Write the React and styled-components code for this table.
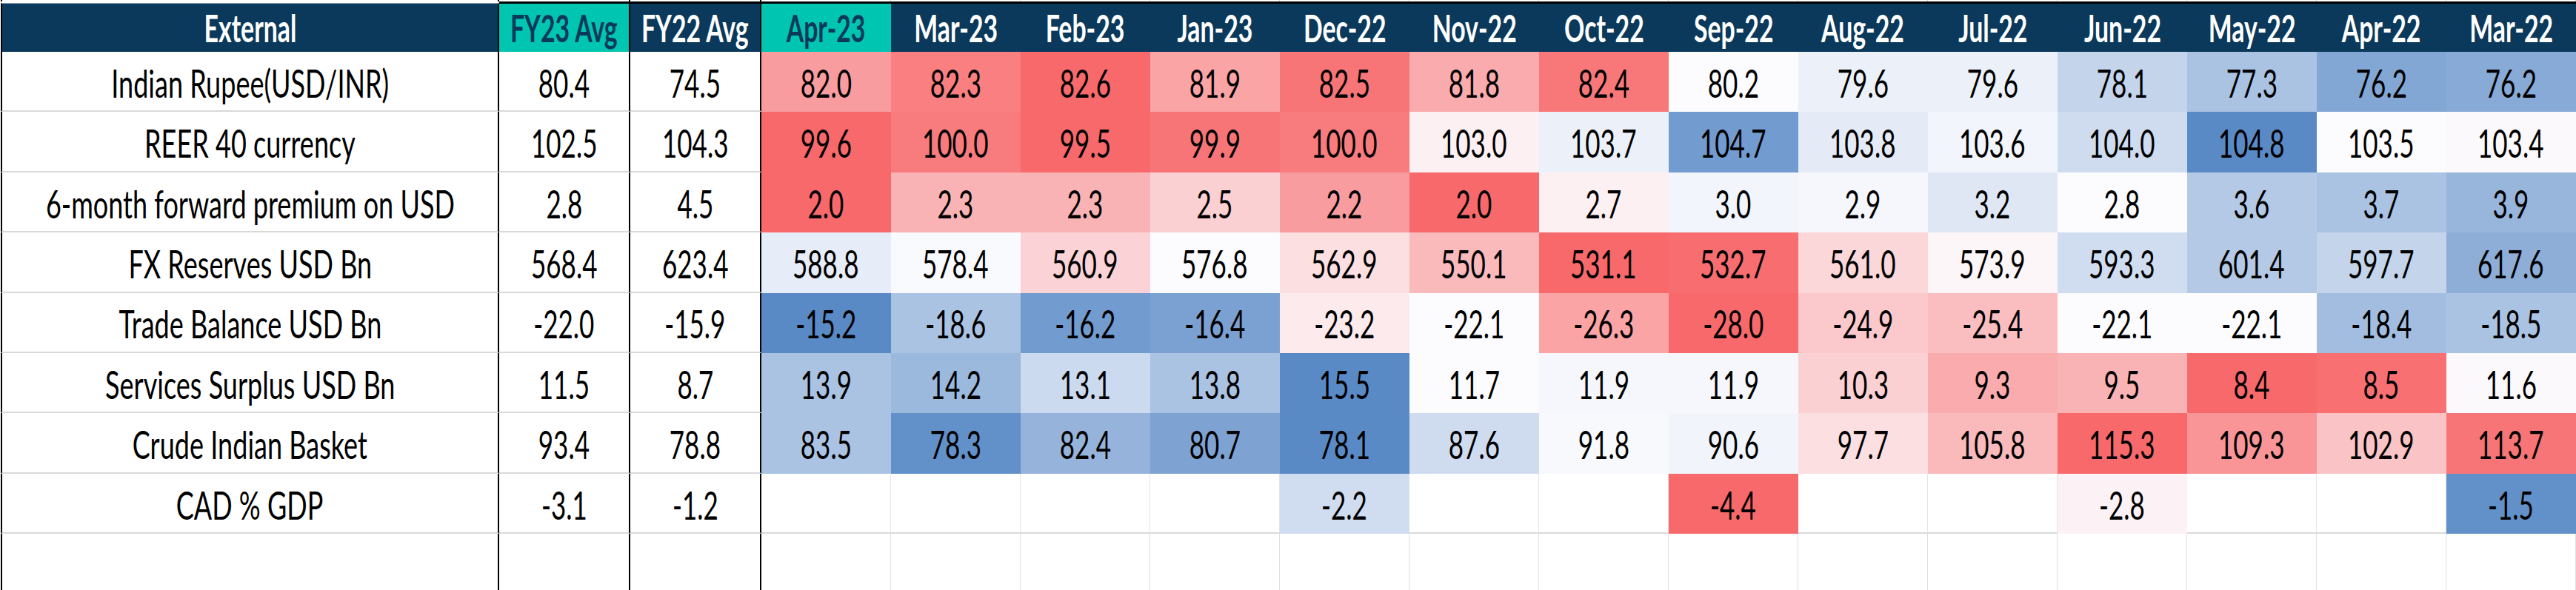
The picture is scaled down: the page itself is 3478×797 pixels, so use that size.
import React from "react";
import styled, { createGlobalStyle, css } from "styled-components";

const GlobalStyle = createGlobalStyle`
  html, body {
    margin: 0;
    padding: 0;
    background: #ffffff;
  }
  body {
    font-family: Lato, "Open Sans", "Liberation Sans", sans-serif;
  }
`;

const NAVY = "#0b395b";
const TEAL = "#00c6b1";
const GRID = "#d9d9d9";
const RULE = "#000000";

const RED = [248, 105, 107];
const WHITE = [252, 252, 255];
const BLUE = [90, 138, 198];

function scaleColor(t) {
  if (t === null || t === undefined) return null;
  const target = t >= 0 ? RED : BLUE;
  const k = Math.min(1, Math.abs(t));
  const c = WHITE.map((w, i) => Math.round(w + (target[i] - w) * k));
  return `rgb(${c[0]}, ${c[1]}, ${c[2]})`;
}

const MONTHS = [
  "Apr-23", "Mar-23", "Feb-23", "Jan-23", "Dec-22", "Nov-22", "Oct-22",
  "Sep-22", "Aug-22", "Jul-22", "Jun-22", "May-22", "Apr-22", "Mar-22",
];

const ROWS = [
  {
    label: "Indian Rupee(USD/INR)", fy23: "80.4", fy22: "74.5",
    values: ["82.0", "82.3", "82.6", "81.9", "82.5", "81.8", "82.4", "80.2", "79.6", "79.6", "78.1", "77.3", "76.2", "76.2"],
    heat: [0.65, 0.85, 1, 0.6, 0.92, 0.55, 0.9, 0, -0.1, -0.1, -0.35, -0.5, -0.75, -0.72],
  },
  {
    label: "REER 40 currency", fy23: "102.5", fy22: "104.3",
    values: ["99.6", "100.0", "99.5", "99.9", "100.0", "103.0", "103.7", "104.7", "103.8", "103.6", "104.0", "104.8", "103.5", "103.4"],
    heat: [1, 0.88, 1, 0.92, 0.88, 0.08, -0.1, -0.85, -0.15, -0.06, -0.28, -1, 0, 0.02],
  },
  {
    label: "6-month forward premium on USD", fy23: "2.8", fy22: "4.5",
    values: ["2.0", "2.3", "2.3", "2.5", "2.2", "2.0", "2.7", "3.0", "2.9", "3.2", "2.8", "3.6", "3.7", "3.9"],
    heat: [1, 0.5, 0.5, 0.3, 0.65, 1, 0.08, -0.06, -0.04, -0.18, 0, -0.45, -0.5, -0.62],
  },
  {
    label: "FX Reserves USD Bn", fy23: "568.4", fy22: "623.4",
    values: ["588.8", "578.4", "560.9", "576.8", "562.9", "550.1", "531.1", "532.7", "561.0", "573.9", "593.3", "601.4", "597.7", "617.6"],
    heat: [-0.13, -0.02, 0.28, 0, 0.2, 0.45, 1, 0.97, 0.25, 0.04, -0.27, -0.45, -0.35, -0.68],
  },
  {
    label: "Trade Balance USD Bn", fy23: "-22.0", fy22: "-15.9",
    values: ["-15.2", "-18.6", "-16.2", "-16.4", "-23.2", "-22.1", "-26.3", "-28.0", "-24.9", "-25.4", "-22.1", "-22.1", "-18.4", "-18.5"],
    heat: [-1, -0.5, -0.85, -0.8, 0.12, 0, 0.6, 1, 0.35, 0.42, 0, 0, -0.55, -0.5],
  },
  {
    label: "Services Surplus USD Bn", fy23: "11.5", fy22: "8.7",
    values: ["13.9", "14.2", "13.1", "13.8", "15.5", "11.7", "11.9", "11.9", "10.3", "9.3", "9.5", "8.4", "8.5", "11.6"],
    heat: [-0.5, -0.6, -0.3, -0.5, -1, 0, -0.04, -0.04, 0.3, 0.55, 0.5, 1, 0.95, 0.02],
  },
  {
    label: "Crude Indian Basket", fy23: "93.4", fy22: "78.8",
    values: ["83.5", "78.3", "82.4", "80.7", "78.1", "87.6", "91.8", "90.6", "97.7", "105.8", "115.3", "109.3", "102.9", "113.7"],
    heat: [-0.5, -0.95, -0.63, -0.78, -1, -0.28, -0.03, -0.07, 0.2, 0.45, 1, 0.7, 0.38, 0.92],
  },
  {
    label: "CAD % GDP", fy23: "-3.1", fy22: "-1.2",
    values: ["", "", "", "", "-2.2", "", "", "-4.4", "", "", "-2.8", "", "", "-1.5"],
    heat: [null, null, null, null, -0.27, null, null, 1, null, null, 0.07, null, null, -0.95],
  },
];

const Sheet = styled.div`
  display: grid;
  grid-template-columns: 673px 177px 177px repeat(14, 1fr);
  grid-template-rows: 2px 68px repeat(8, 81.4px) 1fr;
  width: 3478px;
  height: 797px;
  padding-left: 1px;
  box-sizing: border-box;
  overflow: hidden;
  background: #ffffff;
`;

const ruled = css`
  border-right: 2px solid ${RULE};
  ${(p) => p.$first && `border-left: 2px solid ${RULE};`}
`;

const Cell = styled.div`
  display: flex;
  align-items: center;
  justify-content: center;
  box-sizing: border-box;
  min-width: 0;
  overflow: visible;
`;

const Sliver = styled(Cell)`
  ${(p) => (p.$ruled ? ruled : `border-right: 1px solid ${GRID};`)}
`;

const HeadCell = styled(Cell)`
  background: ${(p) => (p.$teal ? TEAL : NAVY)};
  color: ${(p) => (p.$teal ? NAVY : "#ffffff")};
  ${(p) =>
    p.$first
      ? `margin-top: 2px; border-top: 1px solid #8ea6bb;`
      : `border-top: 3px solid ${RULE};`}
  ${(p) => p.$ruled && ruled}
`;

const FixedCell = styled(Cell)`
  background: #ffffff;
  color: #000000;
  border-bottom: 2px solid ${GRID};
  padding-top: 4px;
  ${ruled}
`;

const HeatCell = styled(Cell)`
  background: ${(p) => p.$bg || "#ffffff"};
  color: #000000;
  padding-top: 4px;
  border-right: 1px solid ${(p) => p.$bg || "#e4e4e4"};
  border-bottom: 2px solid ${(p) => p.$bg || GRID};
`;

const BlankCell = styled(Cell)`
  ${(p) => (p.$ruled ? ruled : `border-right: 1px solid #e0e0e0;`)}
`;

const HeadText = styled.span`
  display: inline-block;
  white-space: nowrap;
  font-weight: 700;
  font-size: 52px;
  line-height: 1.2;
  transform: scaleX(0.65);
`;

const BodyText = styled.span`
  display: inline-block;
  white-space: nowrap;
  font-weight: 400;
  font-size: 53px;
  line-height: 1.2;
  transform: scaleX(${(p) => (p.$wide ? 0.68 : 0.66)});
`;

export default function App() {
  return (
    <>
      <GlobalStyle />
      <Sheet>
        <Sliver $ruled $first />
        <Sliver $ruled />
        <Sliver $ruled />
        {MONTHS.map((m) => (
          <Sliver key={`s-${m}`} />
        ))}

        <HeadCell $first $ruled>
          <HeadText>External</HeadText>
        </HeadCell>
        <HeadCell $teal $ruled>
          <HeadText>FY23 Avg</HeadText>
        </HeadCell>
        <HeadCell $ruled>
          <HeadText>FY22 Avg</HeadText>
        </HeadCell>
        {MONTHS.map((m, i) => (
          <HeadCell key={`h-${m}`} $teal={i === 0}>
            <HeadText>{m}</HeadText>
          </HeadCell>
        ))}

        {ROWS.map((row) => (
          <React.Fragment key={row.label}>
            <FixedCell $first>
              <BodyText $wide>{row.label}</BodyText>
            </FixedCell>
            <FixedCell>
              <BodyText>{row.fy23}</BodyText>
            </FixedCell>
            <FixedCell>
              <BodyText>{row.fy22}</BodyText>
            </FixedCell>
            {row.values.map((v, i) => (
              <HeatCell key={`${row.label}-${MONTHS[i]}`} $bg={scaleColor(row.heat[i])}>
                <BodyText>{v}</BodyText>
              </HeatCell>
            ))}
          </React.Fragment>
        ))}

        <BlankCell $ruled $first />
        <BlankCell $ruled />
        <BlankCell $ruled />
        {MONTHS.map((m) => (
          <BlankCell key={`b-${m}`} />
        ))}
      </Sheet>
    </>
  );
}
